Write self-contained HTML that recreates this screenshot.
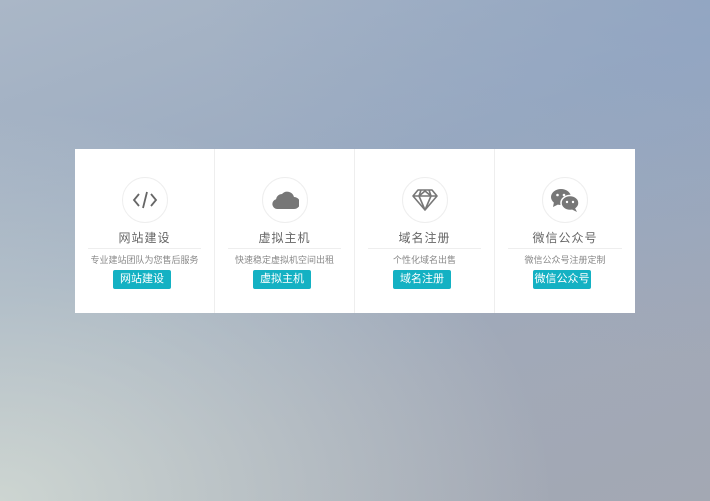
<!DOCTYPE html>
<html><head><meta charset="utf-8"><style>
html,body{margin:0;padding:0;width:710px;height:501px;overflow:hidden}
body{position:relative;font-family:"Liberation Sans","Noto Sans CJK SC",sans-serif;
background:linear-gradient(160deg,#aab7c7 0%,#9aaac0 40%,#a1a9b8 70%,#a3a8b3 100%);}
.ov{position:absolute;inset:0;background:radial-gradient(ellipse at 0% 100%,rgba(210,218,212,.9) 0%,rgba(210,218,212,0) 55%),radial-gradient(ellipse at 100% 0%,rgba(140,162,195,.6) 0%,rgba(140,162,195,0) 50%)}
.card{position:absolute;left:75px;top:149px;width:560px;height:164px;background:#fff;display:flex}
.col{width:140px;height:164px;border-right:1px solid #eee;box-sizing:border-box;position:relative;text-align:center}
.col:last-child{border-right:none}
.ic{position:absolute;left:47px;top:28px;width:44px;height:44px;border:1px solid #eee;border-radius:50%;display:flex;align-items:center;justify-content:center}
.t{position:absolute;left:0;right:0;top:80px;font-size:12px;color:#666;letter-spacing:1px}
.hr{position:absolute;left:13px;right:13px;top:99px;border-top:1px solid #eee}
.d{position:absolute;left:0;right:0;top:104px;font-size:9px;color:#888}
.b{position:absolute;left:38px;top:121px;width:58px;height:19px;background:#14b1c3;color:#fff;font-size:11px;line-height:19px;border-radius:2px}
</style></head><body><div class="ov"></div>
<div class="card">
<div class="col"><div class="ic"><svg width="26" height="22" viewBox="0 0 26 22" fill="none" stroke="#666" stroke-width="1.8"><path d="M7 5L2 11L7 17M19 5L24 11L19 17M15 3L11 19"/></svg></div><div class="t">网站建设</div><div class="hr"></div><div class="d">专业建站团队为您售后服务</div><div class="b">网站建设</div></div>
<div class="col"><div class="ic"><svg width="28" height="20" viewBox="0 0 28 20"><path fill="#777" d="M6 19a5 5 0 0 1-1-9.8A6 6 0 0 1 11 4a7 7 0 0 1 12 3a5.5 5.5 0 0 1 0 12z"/></svg></div><div class="t">虚拟主机</div><div class="hr"></div><div class="d">快速稳定虚拟机空间出租</div><div class="b">虚拟主机</div></div>
<div class="col"><div class="ic"><svg width="28" height="24" viewBox="0 0 28 24" fill="none" stroke="#777" stroke-width="1.6" stroke-linejoin="round"><path d="M7 2H21L26 8L14 22L2 8Z M2 8H26 M10 2L8 8L14 22L20 8L18 2 M8 8L14 3L20 8"/></svg></div><div class="t">域名注册</div><div class="hr"></div><div class="d">个性化域名出售</div><div class="b">域名注册</div></div>
<div class="col"><div class="ic"><svg width="30" height="26" viewBox="0 0 30 26"><ellipse cx="11" cy="10" rx="10" ry="8" fill="#777"/><path d="M4 15L3 20L9 17Z" fill="#777"/><ellipse cx="20" cy="16" rx="9" ry="7.5" fill="#777" stroke="#fff" stroke-width="1.5"/><path d="M25 21L27 25L21 22Z" fill="#777"/><circle cx="7.5" cy="8" r="1.3" fill="#fff"/><circle cx="14" cy="8" r="1.3" fill="#fff"/><circle cx="17" cy="15" r="1.2" fill="#fff"/><circle cx="23" cy="15" r="1.2" fill="#fff"/></svg></div><div class="t">微信公众号</div><div class="hr"></div><div class="d">微信公众号注册定制</div><div class="b">微信公众号</div></div>
</div>
</body></html>
